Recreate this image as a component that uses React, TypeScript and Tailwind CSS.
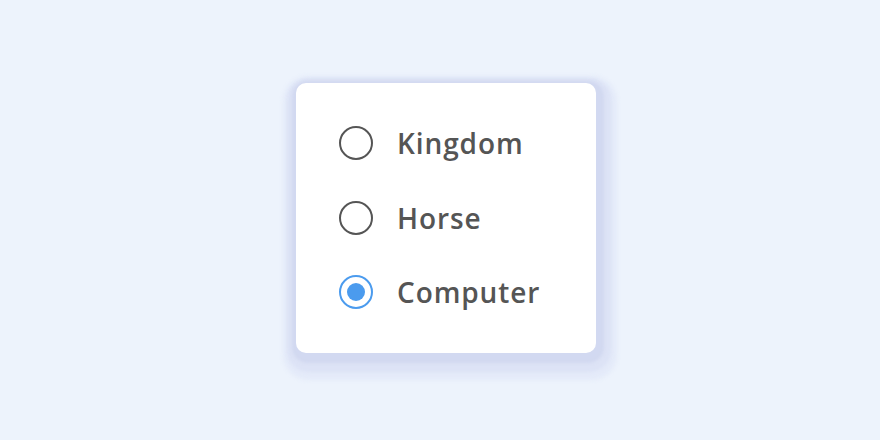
import { useState } from 'react';

const OPTIONS = ['Kingdom', 'Horse', 'Computer'];

function Radio({ checked }: { checked: boolean }) {
  return (
    <span
      className={`flex h-[34px] w-[34px] shrink-0 items-center justify-center rounded-full border-[2.5px] ${
        checked ? 'border-[#4b9bee]' : 'border-[#555555]'
      }`}
    >
      {checked && <span className="h-[18px] w-[18px] rounded-full bg-[#4b9bee]" />}
    </span>
  );
}

export default function App() {
  const [value, setValue] = useState('Computer');

  return (
    <div className="h-[440px] w-[880px] bg-[#edf3fc] pl-[296px] pt-[83px] font-['Open_Sans',sans-serif]">
      <div className="flex h-[270px] w-[300px] flex-col gap-[40.5px] rounded-[10px] bg-white pl-[43px] pt-[43px] shadow-[2px_4px_3px_6px_rgba(200,208,236,0.5),3px_7px_3px_12px_rgba(210,218,242,0.4),4px_10px_4px_17px_rgba(218,225,246,0.45)]">
        {OPTIONS.map((opt) => (
          <label
            key={opt}
            onClick={() => setValue(opt)}
            className="flex h-[34px] cursor-pointer items-center gap-[24px]"
          >
            <Radio checked={value === opt} />
            <span className="text-[28px] font-semibold leading-none tracking-[0.9px] text-[#555555]">{opt}</span>
          </label>
        ))}
      </div>
    </div>
  );
}
